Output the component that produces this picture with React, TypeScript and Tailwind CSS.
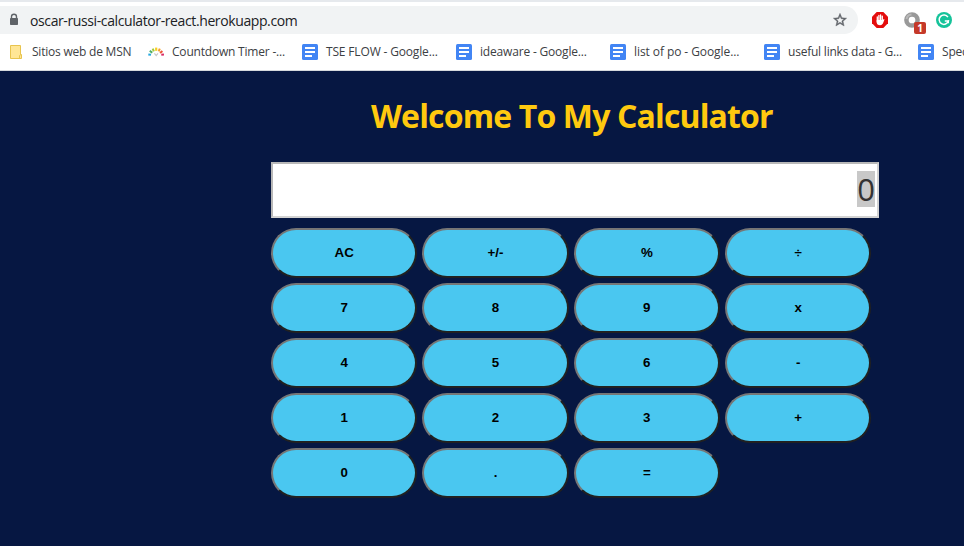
import React from "react";

const bookmarks = [
  { label: "Sitios web de MSN", icon: "folder", item: "w-[140px]", text: "tracking-[-0.22px]" },
  { label: "Countdown Timer -...", icon: "timer", item: "w-[154px]", text: "tracking-[-0.2px]" },
  { label: "TSE FLOW - Google...", icon: "doc", item: "w-[154px]", text: "tracking-[-0.16px]" },
  { label: "ideaware - Google...", icon: "doc", item: "w-[154px]", text: "tracking-[-0.18px]" },
  { label: "list of po - Google...", icon: "doc", item: "w-[154px]", text: "tracking-[-0.08px]" },
  { label: "useful links data - G...", icon: "doc", item: "w-[154px]", text: "tracking-[-0.22px]" },
  { label: "Spec", icon: "doc", item: "w-[154px]", text: "tracking-[-0.2px]" },
];

const keys = ["AC", "+/-", "%", "÷", "7", "8", "9", "x", "4", "5", "6", "-", "1", "2", "3", "+", "0", ".", "="];

function BookmarkIcon({ kind }: { kind: string }) {
  if (kind === "folder") {
    return (
      <svg width="16" height="16" viewBox="0 0 16 16" className="shrink-0">
        <path d="M2.5 1.5H12.5V10.5H13.5V14.5H2.5Z" fill="#ffe695" stroke="#e8c44e" />
        <path d="M11.5 14V11.5L13 10.5" fill="none" stroke="#e8c44e" />
      </svg>
    );
  }
  if (kind === "timer") {
    return (
      <svg width="16" height="16" viewBox="0 0 16 16" fill="none" strokeWidth="2" className="shrink-0">
        <path d="M.3 10.4 3 10.8" stroke="#25a9e0" />
        <path d="m1.8 6.8 2.4 2" stroke="#4fae62" />
        <path d="m4.7 4.6 1.1 2.8" stroke="#a4c93d" />
        <path d="M8.2 3.6v3.2" stroke="#f9cf20" strokeWidth="2.2" />
        <path d="m11.8 4.6-1.1 2.8" stroke="#f6a12d" />
        <path d="m14.4 6.9-2.3 2" stroke="#ed5537" />
        <path d="m16 10.4-2.7.4" stroke="#d92c67" />
        <path d="m6.4 9.4 1.8 2.2 1.8-2.2" stroke="#c8c8c8" strokeWidth="1.2" />
      </svg>
    );
  }
  return (
    <svg width="16" height="16" viewBox="0 0 16 16" className="shrink-0">
      <rect width="16" height="16" rx="1.5" fill="#4285f4" />
      <path d="M3 4h10M3 8h10M3 12h7" stroke="white" strokeWidth="1.8" />
    </svg>
  );
}

function AddressBar() {
  return (
    <div className="flex h-[28px] items-center">
      <div className="flex h-[28px] w-[858px] items-center rounded-l-[10px] rounded-r-full bg-[#f1f3f4] pl-[8px] pr-[10px]">
        <svg width="12" height="14" viewBox="0 0 12 14" className="shrink-0">
          <path d="M3.5 6V3.8a2.5 2.5 0 0 1 5 0V6" fill="none" stroke="#5f6368" strokeWidth="1.4" />
          <rect x="2" y="5" width="8" height="7" rx=".8" fill="#5f6368" />
        </svg>
        <span className="ml-[10px] mt-px text-[14px] leading-[20px] tracking-[-0.39px] text-[#202124]">
          oscar-russi-calculator-react.herokuapp.com
        </span>
        <svg width="16" height="16" viewBox="0 0 24 24" fill="#5f6368" className="ml-auto">
          <path d="M22 9.24l-7.19-.62L12 2 9.19 8.63 2 9.24l5.46 4.73L5.82 21 12 17.27 18.18 21l-1.63-7.03L22 9.24zM12 15.4l-3.76 2.27 1-4.28-3.32-2.88 4.38-.38L12 6.1l1.71 4.04 4.38.38-3.32 2.88 1 4.28L12 15.4z" stroke="#5f6368" strokeWidth=".6" />
        </svg>
      </div>
      <svg width="16" height="16" viewBox="0 0 16 16" className="ml-[14px] shrink-0">
        <path d="M4.7 0h6.6L16 4.7v6.6L11.3 16H4.7L0 11.3V4.7Z" fill="#e40d0d" />
        <path d="M5.3 5v5M6.9 3.5V9M8.6 3V9M10.3 4.2V10" stroke="white" strokeWidth="1.3" strokeLinecap="round" />
        <path d="M4.7 8h6.2l.9-1 .7.6-1.6 4Q10 13.3 8.2 13.3 4.7 13.3 4.7 10Z" fill="white" />
      </svg>
      <div className="relative ml-[16px] h-[16px] w-[16px] shrink-0">
        <svg width="16" height="16" viewBox="0 0 16 16">
          <circle cx="8" cy="8" r="5.6" fill="none" stroke="#999" strokeWidth="4.5" />
          <path d="M2.5 7a5.6 5.6 0 0 1 5-4.6" fill="none" stroke="#b8b8b8" strokeWidth="2" />
        </svg>
        <span className="absolute left-[10px] top-[10px] flex h-[12px] w-[12px] items-center justify-center rounded-[2px] bg-[#c53929] font-['Open_Sans',sans-serif] text-[10px] font-bold leading-none text-white">
          1
        </span>
      </div>
      <svg width="16" height="16" viewBox="0 0 16 16" className="ml-[16px] shrink-0">
        <circle cx="8" cy="8" r="8" fill="#15c39a" />
        <path d="M11.9 5.2A4.7 4.7 0 1 0 12.4 9H8.8" fill="none" stroke="white" strokeWidth="1.5" />
        <path d="M12.4 8.3v3" stroke="white" strokeWidth="1.2" />
      </svg>
    </div>
  );
}

export default function App() {
  return (
    <div className="flex h-[546px] w-[964px] flex-col overflow-hidden bg-[#061742] font-['Open_Sans','Noto_Sans',sans-serif]">
      <header className="h-[71px] shrink-0 border-b border-t-2 border-b-[#d5d9dc] border-t-[#e6e9ed] bg-white pt-[4px]">
        <AddressBar />
        <nav className="mt-[10px] flex h-[16px] items-center pl-[8px]">
          {bookmarks.map((b, i) => (
            <div key={i} className={`flex shrink-0 items-center ${b.item}`}>
              <BookmarkIcon kind={b.icon} />
              <span className={`ml-[8px] whitespace-nowrap text-[12px] leading-[16px] text-[#3c4043] ${b.text}`}>
                {b.label}
              </span>
            </div>
          ))}
        </nav>
      </header>
      <main className="ml-[271px] w-[608px]">
        <h1 className="mt-[23px] h-[43px] whitespace-nowrap pl-[100px] text-[32px] font-bold leading-[44px] tracking-[-0.85px] text-[#ffc90f]">
          Welcome To My Calculator
        </h1>
        <div className="mt-[25px] flex h-[56px] justify-end border-2 border-b-[#d3d3d3] border-l-[#b8b8b8] border-r-[#d3d3d3] border-t-[#b8b8b8] bg-white pr-[2px] pt-[7px]">
          <span className="h-[36px] w-[18px] bg-[#c8c8c8] text-center text-[31px] leading-[36px] text-[#333]">0</span>
        </div>
        <div className="mt-[10px] grid w-[600.33px] grid-cols-4 gap-[5px]">
          {keys.map((k) => (
            <button
              key={k}
              className="h-[50px] rounded-[25px] border-2 border-b-[#212121] border-l-[#767676] border-r-[#212121] border-t-[#767676] bg-[#4ac7f0] font-['Liberation_Sans',sans-serif] text-[13.333px] font-bold text-black"
            >
              {k}
            </button>
          ))}
        </div>
      </main>
    </div>
  );
}
